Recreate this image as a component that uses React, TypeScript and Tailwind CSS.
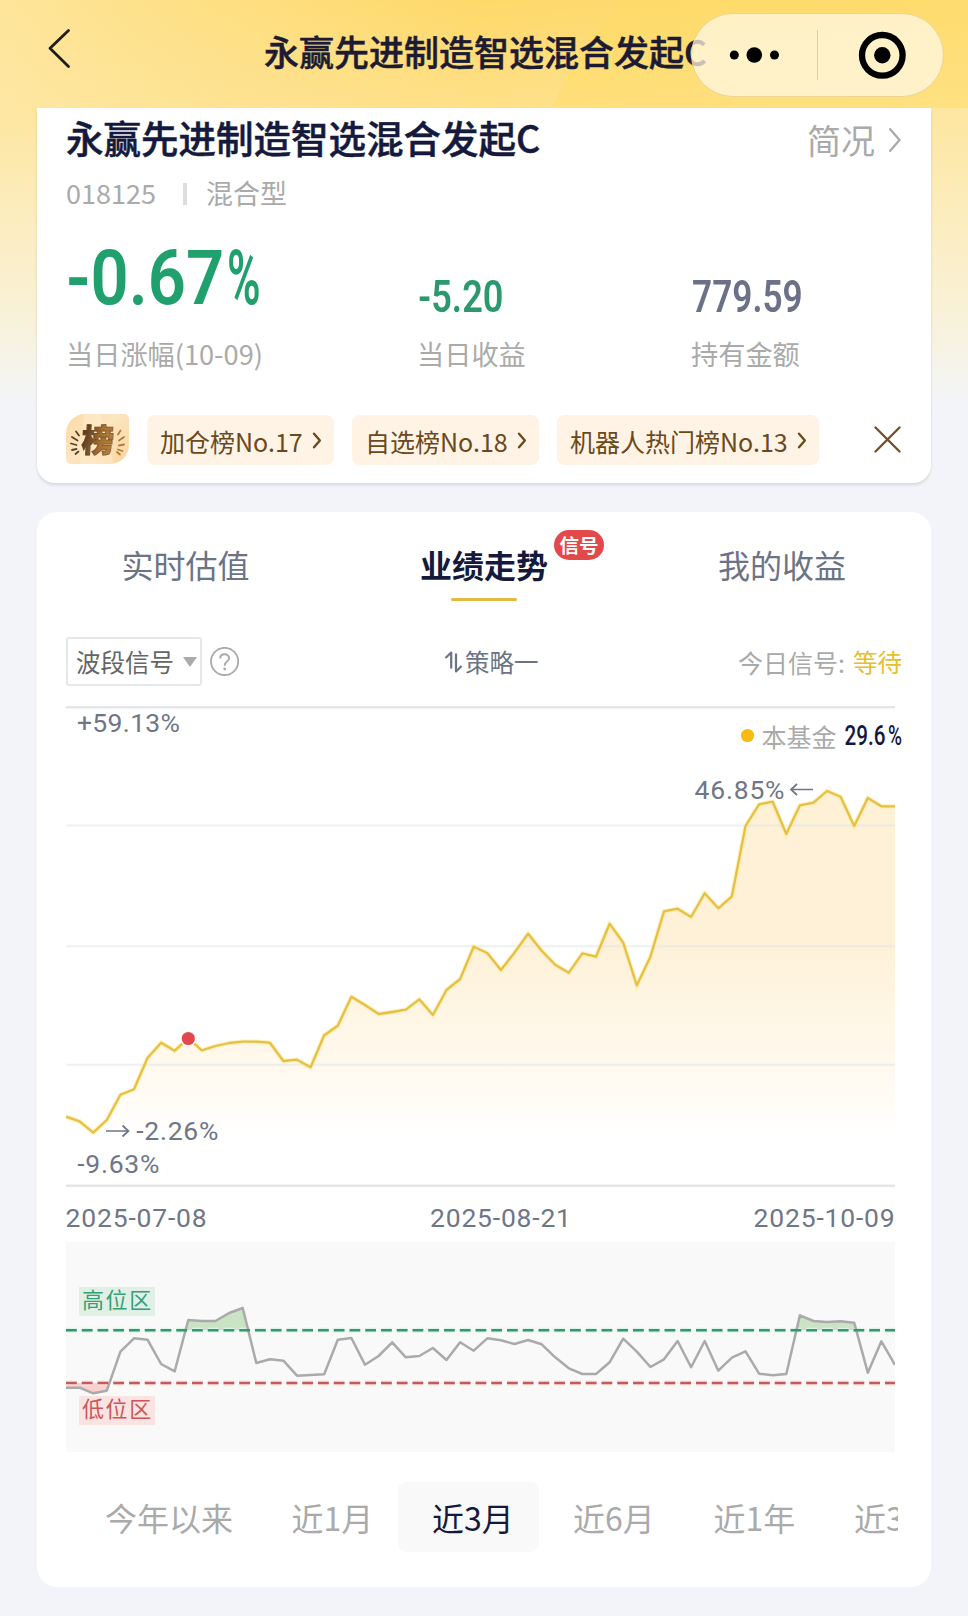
import React from "react";

const STEP = 829 / 61;
const X0 = 66;

const fund = [
  1116.7, 1121.3, 1132.7, 1120, 1094.7, 1089.3, 1058, 1042.7, 1050.7, 1038.3, 1050.3, 1046, 1043, 1041.7, 1041.7,
  1042.7, 1061, 1059.7, 1067.3, 1035.3, 1025.7, 996.7, 1005, 1014, 1012, 1009.7, 999.3, 1015, 990, 979, 946.7, 953, 970,
  952.7, 933.7, 950.7, 964.7, 972.7, 953.3, 956.7, 923.7, 942.7, 985.3, 956.7, 911.3, 908.7, 917, 893.3, 908.3, 896.3,
  826, 804.3, 801.7, 834, 805.3, 802.7, 791, 796.7, 826, 798, 806.3, 806.3,
];

const signal = [
  1387.7, 1387.7, 1393.3, 1390.7, 1351.7, 1338.3, 1339.7, 1364, 1371.3, 1320, 1321, 1321, 1313, 1308, 1363, 1359.3,
  1360.7, 1375.7, 1375, 1374.3, 1339.7, 1338, 1364.7, 1356, 1342.3, 1357.3, 1356, 1348, 1360, 1342.3, 1350.7, 1338.3,
  1340.3, 1344, 1340, 1344.3, 1357.3, 1368.3, 1374, 1374, 1362.3, 1338.7, 1351.7, 1367, 1359.3, 1341, 1367.3, 1341,
  1370.7, 1357.7, 1351.3, 1373.7, 1375.3, 1374, 1315.3, 1321, 1322, 1321.3, 1322.7, 1372.7, 1341.3, 1365,
];

const toPoints = (ys: number[]) => ys.map((y, i) => `${(X0 + i * STEP).toFixed(1)},${y}`).join(" ");

function Chevron({ className }: { className: string }) {
  return (
    <svg viewBox="0 0 12 24" fill="none" stroke="currentColor" className={className}>
      <path d="M1.2 1.2 10.6 12 1.2 22.8" strokeWidth="2.3" strokeLinecap="round" strokeLinejoin="round" />
    </svg>
  );
}

function Header() {
  return (
    <header className="relative flex h-[108px] w-full shrink-0 items-start overflow-hidden bg-[linear-gradient(174deg,#ffd65c_0%,#fedc78_50%,#fde498_100%)]">
      <div className="absolute inset-0 bg-[linear-gradient(90deg,rgba(253,235,180,0.7)_0%,rgba(253,235,180,0)_50%,rgba(253,235,180,0)_100%)]" />
      <svg className="absolute inset-0" width="968" height="108" viewBox="0 0 968 108">
        <path d="M552 108C572 65 590 28 628 0H968V108Z" fill="#ffdb62" opacity="0.4" />
      </svg>
      <svg className="relative ml-[46px] mt-[26px] h-[45px] w-[26px] shrink-0" viewBox="0 0 26 45" fill="none">
        <path d="M22.5 4.4 4 22.3 22.5 40.4" stroke="#211d1a" strokeWidth="2.8" strokeLinecap="round" strokeLinejoin="round" />
      </svg>
      <h1 className="relative ml-[192px] mt-[25px] whitespace-nowrap text-[35px] font-medium leading-[52px] text-[#1c1b33] [-webkit-text-stroke:0.5px_#1c1b33]">
        永赢先进制造智选混合发起C
      </h1>
      <div className="absolute left-[691px] top-[13px] flex h-[84px] w-[253px] items-center rounded-full border border-[#ecd591] bg-[#fff8e4]/75">
        <svg width="251" height="82" viewBox="692 14 251 82">
          <circle cx="734.3" cy="55" r="4.5" />
          <circle cx="754.3" cy="55" r="7.8" />
          <circle cx="774.5" cy="55" r="4.5" />
          <path d="M817.5 30V80" stroke="#dccfa8" strokeWidth="1" />
          <circle cx="882.3" cy="55.3" r="20.3" fill="none" stroke="#000" strokeWidth="6.3" />
          <circle cx="882.3" cy="55.3" r="8.2" />
        </svg>
      </div>
    </header>
  );
}

function RankIcon() {
  return (
    <div className="relative flex h-[50px] w-[63px] items-center justify-center overflow-hidden rounded-bl-[5px] rounded-br-[19px] rounded-tl-[19px] rounded-tr-[5px] bg-[linear-gradient(135deg,#fbd9a6_0%,#fde6c0_45%,#fbd59e_100%)]">
      <svg className="absolute inset-0" width="63" height="50" viewBox="0 0 63 50" fill="none">
        <path d="M18 0H34L48 50H14Z" fill="#fff0d5" opacity="0.45" />
        <g stroke="#59412a" strokeWidth="1.8" strokeLinecap="round">
          <path d="M10 17.5 13 21.5M6 23 11.5 26.5M5 29.5 10.5 31M6 36 10.5 35M9.500 40 12.500 37.500" />
        </g>
        <g stroke="#b07b3d" strokeWidth="1.8" strokeLinecap="round">
          <path d="M54.500 16.500 52 20.500M58 23 53 26.500M58 30.500 53 31.500M56.500 37 52 35.500M54 40.500 51 38" />
        </g>
      </svg>
      <span className="relative -top-px -skew-x-3 bg-[linear-gradient(100deg,#4c3420_10%,#a97132_60%,#b88345_100%)] bg-clip-text pl-px text-[32px] font-black leading-[48px] text-transparent [-webkit-text-stroke:1px_rgba(110,72,30,0.5)]">
        榜
      </span>
    </div>
  );
}

function Chip({ label, width }: { label: string; width: string }) {
  return (
    <div className={`flex h-[50px] ${width} shrink-0 items-center justify-between rounded-lg bg-[#fff3e6] pl-[13px] pr-[13px] text-[25px] text-[#6a4a1c]`}>
      <span className="whitespace-nowrap pt-px leading-[50px]">{label}</span>
      <Chevron className="mt-px h-[15px] w-[8px] overflow-visible [&_path]:[stroke-width:3.8]" />
    </div>
  );
}

function Summary() {
  return (
    <section className="mx-[37px] h-[375px] shrink-0 rounded-b-[18px] bg-white pl-[29px] pr-[30px] shadow-[0_2px_3px_rgba(0,0,0,0.12)]">
      <div className="flex h-[62px] items-center justify-between">
        <h2 className="-mt-[4px] text-[37.5px] font-medium leading-[56px] text-[#151a3d] [-webkit-text-stroke:0.5px_#151a3d]">永赢先进制造智选混合发起C</h2>
        <div className="flex items-center gap-[14px] pt-[2px] text-[34px] leading-[50px] text-[#aaa]">
          简况
          <Chevron className="h-[24px] w-[12px]" />
        </div>
      </div>
      <div className="-mt-px flex h-[49px] items-center text-[27px] text-[#aaa]">
        <span>018125</span>
        <span className="ml-[27px] h-[22px] w-[4px] bg-[#ddd]" />
        <span className="ml-[19px]">混合型</span>
      </div>
      <div className="flex h-[162px] pt-[20px] text-[27.2px] leading-[40px] text-[#aaa]">
        <div className="w-[351px]">
          <div className="flex h-[95px] items-start pt-[2px] font-[Roboto] text-[76px] font-semibold leading-[76px] text-[#1fa06c]">
            <span className="block w-[161px] origin-left scale-x-[0.88]">-0.67</span>
            <span className="block origin-left scale-x-[0.6]">%</span>
          </div>
          <div>当日涨幅(10-09)</div>
        </div>
        <div className="w-[274px]">
          <div className="flex h-[95px] items-start pl-px pt-[38px]">
            <span className="origin-left scale-x-[0.83] font-[Roboto] text-[43.5px] font-semibold leading-[44px] text-[#2c986d]">-5.20</span>
          </div>
          <div>当日收益</div>
        </div>
        <div>
          <div className="flex h-[95px] items-start pl-px pt-[38px]">
            <span className="origin-left scale-x-[0.81] font-[Roboto] text-[43.5px] font-semibold leading-[44px] text-[#6b7287]">779.59</span>
          </div>
          <div>持有金额</div>
        </div>
      </div>
      <div className="flex items-center pt-[34px]">
        <RankIcon />
        <div className="relative top-px ml-[18px] flex gap-[18px]">
          <Chip label="加仓榜No.17" width="w-[187px]" />
          <Chip label="自选榜No.18" width="w-[187px]" />
          <Chip label="机器人热门榜No.13" width="w-[262px]" />
        </div>
        <svg className="ml-auto h-[27px] w-[27px]" viewBox="0 0 27 27">
          <path d="M1.5 1.5 25.5 25.5M25.5 1.5 1.5 25.5" stroke="#705027" strokeWidth="2.3" strokeLinecap="round" />
        </svg>
      </div>
    </section>
  );
}

function Tabs() {
  return (
    <div className="grid h-[108px] grid-cols-3 text-center text-[32px] leading-[48px] text-[#6b7385]">
      <div className="pr-px pt-[28px]">实时估值</div>
      <div className="relative flex flex-col items-center pt-[28px]">
        <span className="font-bold text-[#151a3d]">业绩走势</span>
        <span className="mt-[10px] h-[3px] w-[66px] rounded-full bg-[#e4b93f]" />
        <span className="absolute left-[219px] top-[18px] h-[30px] w-[50px] rounded-full bg-[#e3494b] text-[19.5px] font-bold leading-[30px] text-white">信号</span>
      </div>
      <div className="pt-[28px]">我的收益</div>
    </div>
  );
}

function Toolbar() {
  return (
    <div className="ml-[29px] mr-[29px] mt-[17px] flex h-[49px] items-center text-[24.5px] leading-[36px]">
      <div className="flex h-[49px] w-[136px] items-center rounded-[3px] border-2 border-[#e4e8ea] pl-[8px] text-[#666]">
        波段信号
        <svg className="ml-[9px] h-[10px] w-[14px]" viewBox="0 0 14 10">
          <path d="M0 0H14L7 10Z" fill="#aaa" />
        </svg>
      </div>
      <svg className="ml-[8px] h-[30px] w-[30px]" viewBox="0 0 30 30" fill="none" stroke="#aaa">
        <circle cx="14.6" cy="14.4" r="13.6" strokeWidth="1.8" />
        <path d="M10.2 11.6C10.2 8.9 12.1 7.3 14.7 7.3 17.2 7.3 19.1 8.9 19.1 11.2 19.1 14.4 14.7 14.5 14.7 18.2V18.8" strokeWidth="2" />
        <circle cx="14.7" cy="22" r="1.4" fill="#aaa" stroke="none" />
      </svg>
      <div className="ml-[204px] flex items-center text-[#6b7385]">
        <svg className="h-[24px] w-[20px]" viewBox="0 0 20 24" fill="none" stroke="#6b7385" strokeWidth="2.2">
          <path d="M7.2 18.5V2.5L1.5 8M12 3.5V21.5L17.6 16" strokeLinejoin="round" />
        </svg>
        <span className="ml-[1px]">策略一</span>
      </div>
      <div className="ml-auto flex text-[#aaa]">
        <span className="text-[25px]">今日信号:</span>
        <span className="ml-[8px] text-[#e5c02a]">等待</span>
      </div>
    </div>
  );
}

function AxisText({ x, y, w, children }: { x: number; y: number; w: number; children: string }) {
  return (
    <text x={x} y={y} textLength={w} className="fill-[#6f7687] font-[Roboto] text-[26.5px]">
      {children}
    </text>
  );
}

function TrendChart() {
  return (
    <svg className="ml-[29px] block shrink-0" width="850" height="542" viewBox="66 700 850 542" fill="none">
      <defs>
        <linearGradient id="area" gradientUnits="userSpaceOnUse" x1="0" y1="790" x2="0" y2="1135">
          <stop offset="0" stopColor="#fef1d6" />
          <stop offset="0.45" stopColor="#fef1d9" />
          <stop offset="0.75" stopColor="#fff8ea" />
          <stop offset="1" stopColor="#ffffff" />
        </linearGradient>
      </defs>
      <path d={`M66 1134L${toPoints(fund)} 895,1134Z`} fill="url(#area)" />
      <path d="M66 825.5H895M66 946.3H895M66 1064.8H895" stroke="#dde3e8" strokeOpacity="0.5" strokeWidth="2" />
      <path d="M66 707.3H895M66 1185.8H895" stroke="#e4e7ea" strokeWidth="2.5" />
      <polyline points={toPoints(fund)} stroke="#fbe88c" strokeOpacity="0.5" strokeWidth="4.5" />
      <polyline points={toPoints(fund)} stroke="#e6c045" strokeWidth="2.3" strokeLinejoin="round" />
      <circle cx="188.3" cy="1038.5" r="8" fill="#fff" />
      <circle cx="188.3" cy="1038.5" r="6.6" fill="#e3494b" />

      <AxisText x={77} y={731.7} w={103}>+59.13%</AxisText>
      <AxisText x={694.5} y={798.7} w={90}>46.85%</AxisText>
      <AxisText x={136.3} y={1140.3} w={82}>-2.26%</AxisText>
      <AxisText x={77.3} y={1173} w={82}>-9.63%</AxisText>
      <AxisText x={65.6} y={1226.5} w={141}>2025-07-08</AxisText>
      <AxisText x={430} y={1226.5} w={141}>2025-08-21</AxisText>
      <AxisText x={753.6} y={1226.5} w={141}>2025-10-09</AxisText>
      <path d="M813 789.5H791M797 784 791 789.5 797 795M106 1131H128.5M122.5 1125.5 128.5 1131 122.5 1136.5" stroke="#6f7687" strokeWidth="1.7" />

      <circle cx="747.5" cy="735.5" r="6.6" fill="#f8bb10" />
      <text x="761.5" y="746.5" className="fill-[#aaa] text-[25px]">本基金</text>
      <text x="844.5" y="745.3" textLength="41" lengthAdjust="spacingAndGlyphs" className="fill-[#151a3d] font-[Roboto] text-[27px] font-medium">29.6</text>
      <text x="888" y="745.3" textLength="14" lengthAdjust="spacingAndGlyphs" className="fill-[#151a3d] font-[Roboto] text-[27px] font-medium">%</text>
    </svg>
  );
}

function SignalChart() {
  return (
    <svg className="ml-[29px] block shrink-0 bg-[#f9f9f9]" width="829" height="210" viewBox="66 1242 829 210" fill="none">
      <clipPath id="high">
        <rect x="66" y="1242" width="829" height="88" />
      </clipPath>
      <clipPath id="low">
        <rect x="66" y="1383" width="829" height="69" />
      </clipPath>
      <path d={`M66 1390L${toPoints(signal)} 895,1390Z`} fill="#c9e3c4" clipPath="url(#high)" />
      <path d={`M66 1383L${toPoints(signal)} 895,1383Z`} fill="#fad0ce" clipPath="url(#low)" />
      <path d="M66 1330.2H895" stroke="#d9f6e6" strokeWidth="5" strokeDasharray="10.8 4.95" />
      <path d="M66 1383H895" stroke="#fde2e0" strokeWidth="5" strokeDasharray="10.8 4.95" />
      <polyline points={toPoints(signal)} stroke="#aaaaaa" strokeWidth="2.5" strokeLinejoin="round" />
      <path d="M66 1330.2H895" stroke="#3a9470" strokeWidth="2.5" strokeDasharray="10.8 4.95" />
      <path d="M66 1383H895" stroke="#c25b5b" strokeWidth="2.5" strokeDasharray="10.8 4.95" />
      <rect x="79" y="1287" width="76" height="29" fill="#e1f0e4" />
      <text x="82" y="1307.5" className="fill-[#35a078] text-[22px] tracking-[1.6px]">高位区</text>
      <rect x="79" y="1396" width="76" height="29" fill="#fae4e3" />
      <text x="82" y="1417" className="fill-[#cd5557] text-[22px] tracking-[1.6px]">低位区</text>
    </svg>
  );
}

function Periods() {
  return (
    <div className="ml-[33px] mr-[33px] mt-[30px] flex h-[70px] overflow-hidden whitespace-nowrap text-[32px] leading-[70px] text-[#aaa]">
      <span className="w-[187px] shrink-0 pl-[35px]">今年以来</span>
      <span className="w-[141px] shrink-0 pl-[34.5px]">近1月</span>
      <span className="w-[141px] shrink-0 rounded-lg bg-[#f9f9fa] pl-[34px] text-[#151a3d]">近3月</span>
      <span className="w-[141px] shrink-0 pl-[34px]">近6月</span>
      <span className="w-[141px] shrink-0 pl-[33.5px]">近1年</span>
      <span className="w-[141px] shrink-0 pl-[33px]">近3年</span>
    </div>
  );
}

export default function App() {
  return (
    <div className="flex h-[1616px] w-[968px] flex-col overflow-hidden bg-[#f3f4fa] bg-[linear-gradient(180deg,#fde69f_0px,#fde69f_108px,#fcedbf_220px,#f9f1d4_300px,#f5f4ec_370px,#f3f4fa_405px)] font-['Noto_Sans_CJK_SC',sans-serif]">
      <Header />
      <Summary />
      <section className="mx-[37px] mt-[29px] flex h-[1075px] shrink-0 flex-col rounded-[20px] bg-white">
        <Tabs />
        <Toolbar />
        <div className="h-[14px] shrink-0" />
        <TrendChart />
        <SignalChart />
        <Periods />
      </section>
    </div>
  );
}
